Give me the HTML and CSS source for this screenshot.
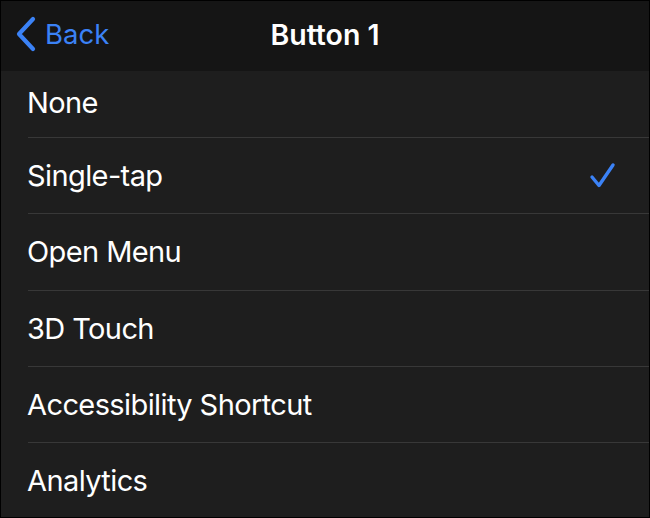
FILE: index.html
```html
<!DOCTYPE html>
<html>
<head>
<meta charset="utf-8">
<link rel="stylesheet" href="styles.css">
</head>
<body>
<div class="screen">
  <header class="nav">
    <div class="back">
      <svg class="chev" width="22" height="36" viewBox="0 0 22 36"><path d="M18 3 L4 18 L18 33" fill="none" stroke="#3b82f6" stroke-width="4.2" stroke-linecap="round" stroke-linejoin="round"/></svg>
      <span>Back</span>
    </div>
    <h1 class="title">Button 1</h1>
    <div></div>
  </header>
  <ul class="list">
    <li class="row first"><span>None</span></li>
    <li class="row"><span>Single-tap</span>
      <svg class="check" width="28" height="28" viewBox="0 0 28 28"><path d="M3 15 L10 23.5 L24 3" fill="none" stroke="#3b82f6" stroke-width="3.4" stroke-linecap="round" stroke-linejoin="round"/></svg>
    </li>
    <li class="row"><span>Open Menu</span></li>
    <li class="row"><span>3D Touch</span></li>
    <li class="row"><span>Accessibility Shortcut</span></li>
    <li class="row last"><span>Analytics</span></li>
  </ul>
</div>
</body>
</html>
```
FILE: styles.css
```css
html, body {
  margin: 0;
  padding: 0;
  background: #000;
}
.screen {
  width: 650px;
  height: 518px;
  box-sizing: border-box;
  border: 1px solid #000;
  background: #1e1e1e;
  overflow: hidden;
  display: flex;
  flex-direction: column;
  font-family: Inter, "Noto Sans", sans-serif;
  color: #fff;
}
.nav {
  height: 70px;
  flex: none;
  background: #151515;
  display: grid;
  grid-template-columns: 1fr auto 1fr;
  align-items: center;
}
.back {
  display: flex;
  align-items: center;
  gap: 8px;
  padding-left: 14px;
  color: #3b82f6;
  font-size: 27.5px;
  margin-top: -4px;
}
.chev { display: block; }
.title {
  margin: 0;
  font-size: 28.5px;
  font-weight: 600;
  margin-top: -4px;
}
.list {
  list-style: none;
  margin: 0;
  padding: 0;
}
.row {
  height: 75.3px;
  margin-left: 27px;
  padding-right: 32px;
  border-bottom: 1px solid #383838;
  display: flex;
  align-items: center;
  justify-content: space-between;
  font-size: 29px;
  letter-spacing: -0.6px;
}
.row span { margin-left: -1px; }
.row.first {
  height: 66px;
  align-items: flex-end;
}
.row.first span { padding-bottom: 17px; }
.row.last { border-bottom: none; }
.check { display: block; }
```
